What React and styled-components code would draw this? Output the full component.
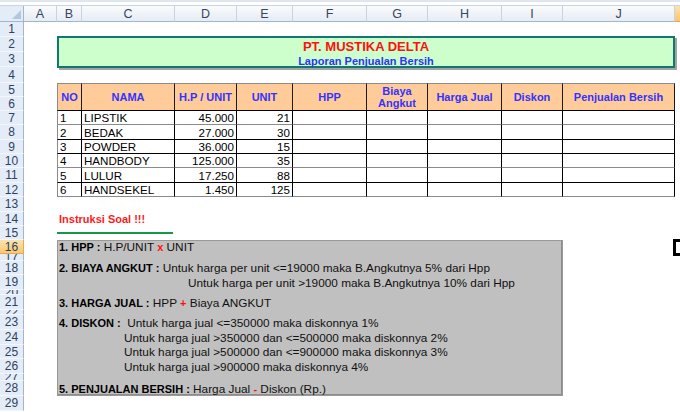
import React from 'react';
import styled, { createGlobalStyle, css } from 'styled-components';

const COLS = [24, 33, 25, 93, 62, 56, 74, 61, 74, 61, 112, 40];
const LETTERS = ['A', 'B', 'C', 'D', 'E', 'F', 'G', 'H', 'I', 'J', 'K'];
const ROWS = [15, 15, 15, 16, 14, 14, 14, 15, 14, 14, 15, 14, 15, 14, 14, 14, 7, 14, 15, 5, 15, 5, 15, 15, 14, 15, 7, 15, 15];
const TABLE_COLS = COLS.slice(2, 11);
const TABLE_ROWS = ROWS.slice(4, 12);
const BOX_ROWS = ROWS.slice(15, 28);

const ACTIVE_ROW = 16;
const ACTIVE_COL = 'K';

const Global = createGlobalStyle`
  html, body { margin: 0; padding: 0; background: #fff; overflow: hidden; }
  body { font-family: "Liberation Sans", Arial, sans-serif; }
  * { box-sizing: border-box; }
`;

const Page = styled.div`
  width: 680px;
  height: 412px;
  overflow: hidden;
  display: flex;
  flex-direction: column;
  background: #fff;
`;

const FormulaEdge = styled.div`
  flex: none;
  height: 6px;
  width: 715px;
  background: #fff;
  border-top: 2px solid #dfe6ef;
  border-bottom: 1px solid #c9d5e3;
`;

const Sheet = styled.div`
  flex: none;
  display: grid;
  grid-template-columns: ${COLS.map((c) => c + 'px').join(' ')};
  grid-template-rows: 16px ${ROWS.map((r) => r + 'px').join(' ')};
`;

const activeHead = css`
  background: linear-gradient(#fbe3ae, #f6c870);
  border-color: #e9a84b;
`;

const Corner = styled.div`
  grid-column: 1;
  grid-row: 1;
  position: relative;
  background: #e4ecf7;
  border-right: 1px solid #9eb6ce;
  border-bottom: 1px solid #9eb6ce;
  &::after {
    content: '';
    position: absolute;
    right: 2px;
    bottom: 2px;
    border-style: solid;
    border-width: 0 0 9px 9px;
    border-color: transparent transparent #b5c7dc transparent;
  }
`;

const ColHead = styled.div`
  grid-row: 1;
  grid-column: ${(p) => p.$c};
  display: flex;
  align-items: center;
  justify-content: center;
  font-size: 12.5px;
  color: #34465f;
  background: linear-gradient(#f9fbfd, #e6ecf4);
  border-right: 1px solid #c7d3e2;
  border-bottom: 1px solid #9eb6ce;
  ${(p) => p.$active && activeHead}
`;

const RowHead = styled.div`
  grid-column: 1;
  grid-row: ${(p) => p.$r};
  overflow: hidden;
  display: flex;
  align-items: center;
  justify-content: center;
  font-size: 12px;
  line-height: 12px;
  color: #2e4361;
  background: #e4ecf7;
  border-right: 1px solid #9eb6ce;
  border-bottom: 1px solid #f3f6fb;
  ${(p) => p.$active && activeHead}
`;

const TitleBox = styled.div`
  grid-column: 3 / 12;
  grid-row: 3 / 5;
  margin: -1px 0 -1px 0;
  background: #ccffcc;
  border: 2px solid #11786f;
  box-shadow: 2px 2px 0 #a3a3a3;
  display: flex;
  flex-direction: column;
  align-items: center;
  padding-top: 1px;
`;

const Title = styled.div`
  font-size: 13px;
  line-height: 15px;
  font-weight: bold;
  color: #ff1010;
`;

const Subtitle = styled.div`
  font-size: 11px;
  line-height: 15px;
  font-weight: bold;
  color: #2b36ee;
`;

const Table = styled.div`
  grid-column: 3 / 12;
  grid-row: 6 / 14;
  display: grid;
  grid-template-columns: ${TABLE_COLS.map((c) => c + 'px').join(' ')};
  grid-template-rows: ${TABLE_ROWS.map((r) => r + 'px').join(' ')};
`;

const HeadCell = styled.div`
  grid-row: 1 / 3;
  display: flex;
  align-items: center;
  justify-content: center;
  text-align: center;
  background: #ffcc99;
  color: #3333ff;
  font-size: 11px;
  line-height: 12px;
  font-weight: bold;
  border-top: 1px solid #8c8c8c;
  border-right: 1px solid #1a1a1a;
  border-bottom: 1px solid #000;
  ${(p) => p.$first && css`border-left: 1px solid #8c8c8c;`}
`;

const Cell = styled.div`
  display: flex;
  align-items: center;
  justify-content: ${(p) => (p.$right ? 'flex-end' : 'flex-start')};
  padding: 0 2px;
  font-size: 11.6px;
  color: #000;
  white-space: nowrap;
  border-right: 1px solid #000;
  border-bottom: 1px solid ${(p) => (p.$soft ? '#8a8a8a' : '#000')};
  ${(p) => p.$first && css`border-left: 1px solid #8a8a8a;`}
`;

const Instruksi = styled.div`
  grid-column: 3 / 8;
  grid-row: 15;
  padding-left: 2px;
  font-size: 11px;
  line-height: 14px;
  font-weight: bold;
  color: #ff1a1a;
  white-space: nowrap;
`;

const GreenRule = styled.div`
  grid-column: 3 / 5;
  grid-row: 16;
  align-self: start;
  margin-top: 6px;
  width: 116px;
  height: 2px;
  background: #13994c;
`;

const InstrBox = styled.div`
  grid-column: 3 / 11;
  grid-row: 17 / 30;
  background: #c0c0c0;
  box-shadow: inset 0 0 0 1px #999, inset -2px -2px 0 0 #8c8c8c;
  display: grid;
  grid-template-rows: ${BOX_ROWS.map((r) => r + 'px').join(' ')};
`;

const InstrLine = styled.div`
  grid-row: ${(p) => p.$r};
  display: flex;
  align-items: center;
  padding-left: ${(p) => 2 + (p.$indent || 0)}px;
  font-size: 11.8px;
  color: #111;
  white-space: pre;
`;

const Strong = styled.span`
  font-size: 11px;
  font-weight: bold;
  color: #000;
`;

const Op = styled.span`
  font-size: 11px;
  font-weight: bold;
  color: #ff1010;
`;

const ActiveCell = styled.div`
  grid-column: 12;
  grid-row: 17;
  margin: -1px 0 -2px -2px;
  border: 3px solid #000;
`;

const data = [
  ['1', 'LIPSTIK', '45.000', '21'],
  ['2', 'BEDAK', '27.000', '30'],
  ['3', 'POWDER', '36.000', '15'],
  ['4', 'HANDBODY', '125.000', '35'],
  ['5', 'LULUR', '17.250', '88'],
  ['6', 'HANDSEKEL', '1.450', '125'],
];
const softRows = [true, false, false, true, false, true];
const headers = ['NO', 'NAMA', 'H.P / UNIT', 'UNIT', 'HPP', 'Biaya\nAngkut', 'Harga Jual', 'Diskon', 'Penjualan Bersih'];

export default function App() {
  return (
    <Page>
      <Global />
      <FormulaEdge />
      <Sheet>
        <Corner />
        {LETTERS.map((l, i) => (
          <ColHead key={l} $c={i + 2} $active={l === ACTIVE_COL}>{l}</ColHead>
        ))}
        {ROWS.map((_, i) => (
          <RowHead key={i} $r={i + 2} $active={i + 1 === ACTIVE_ROW}>{i + 1}</RowHead>
        ))}

        <TitleBox>
          <Title>PT. MUSTIKA DELTA</Title>
          <Subtitle>Laporan Penjualan Bersih</Subtitle>
        </TitleBox>

        <Table>
          {headers.map((h, i) => (
            <HeadCell key={h} $first={i === 0}>
              {h.split('\n').map((t, k) => (
                <React.Fragment key={k}>{k > 0 && <br />}{t}</React.Fragment>
              ))}
            </HeadCell>
          ))}
          {data.map((row, r) =>
            [0, 1, 2, 3, 4, 5, 6, 7, 8].map((c) => (
              <Cell key={r + '-' + c} $first={c === 0} $right={c === 2 || c === 3} $soft={softRows[r]}>
                {row[c] || ''}
              </Cell>
            ))
          )}
        </Table>

        <Instruksi>Instruksi Soal !!!</Instruksi>
        <GreenRule />

        <InstrBox>
          <InstrLine $r={1}><Strong>1. HPP :</Strong> H.P/UNIT <Op>x</Op> UNIT</InstrLine>
          <InstrLine $r={3}><Strong>2. BIAYA ANGKUT :</Strong> Untuk harga per unit &lt;=19000 maka B.Angkutnya 5% dari Hpp</InstrLine>
          <InstrLine $r={4} $indent={129}>Untuk harga per unit &gt;19000 maka B.Angkutnya 10% dari Hpp</InstrLine>
          <InstrLine $r={6}><Strong>3. HARGA JUAL :</Strong> HPP <Op>+</Op> Biaya ANGKUT</InstrLine>
          <InstrLine $r={8}><Strong>4. DISKON :</Strong>  Untuk harga jual &lt;=350000 maka diskonnya 1%</InstrLine>
          <InstrLine $r={9} $indent={65}>Untuk harga jual &gt;350000 dan &lt;=500000 maka diskonnya 2%</InstrLine>
          <InstrLine $r={10} $indent={65}>Untuk harga jual &gt;500000 dan &lt;=900000 maka diskonnya 3%</InstrLine>
          <InstrLine $r={11} $indent={65}>Untuk harga jual &gt;900000 maka diskonnya 4%</InstrLine>
          <InstrLine $r={13}><Strong>5. PENJUALAN BERSIH :</Strong> Harga Jual <Op>-</Op> Diskon (Rp.)</InstrLine>
        </InstrBox>

        <ActiveCell />
      </Sheet>
    </Page>
  );
}
